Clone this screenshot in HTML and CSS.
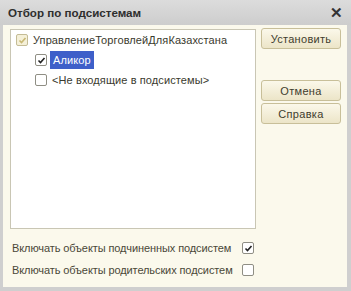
FILE: index.html
```html
<!DOCTYPE html>
<html>
  <head>
    <title>Отбор по подсистемам</title>
    <link rel="stylesheet" href="styles.css">
  </head>
  <body>
    <div class="window">
      <div class="title-bar">
        <span class="title">Отбор по подсистемам</span>
        <span class="close">✕</span>
      </div>
      <div class="window-body">
        <div class="main">
          <div class="tree">
            <div class="tree-row">
              <span class="check check-gray">
                <svg width="9" height="9" viewBox="0 0 9 9"><path d="M1.5 4.5 L3.5 6.5 L7.5 2" fill="none" stroke="#c8b874" stroke-width="1.6"/></svg>
              </span>
              <span class="tree-text">УправлениеТорговлейДляКазахстана</span>
            </div>
            <div class="tree-row level-2">
              <span class="check">
                <svg width="9" height="9" viewBox="0 0 9 9"><path d="M1.5 4.5 L3.5 6.5 L7.5 2" fill="none" stroke="#222" stroke-width="1.6"/></svg>
              </span>
              <span class="tree-text selected">Аликор</span>
            </div>
            <div class="tree-row level-2">
              <span class="check"></span>
              <span class="tree-text">&lt;Не входящие в подсистемы&gt;</span>
            </div>
          </div>
          <div class="buttons">
            <button class="btn">Установить</button>
            <button class="btn btn-cancel">Отмена</button>
            <button class="btn">Справка</button>
          </div>
        </div>
        <div class="options">
          <div class="option">
            <span class="option-text">Включать объекты подчиненных подсистем</span>
            <span class="check">
              <svg width="9" height="9" viewBox="0 0 9 9"><path d="M1.5 4.5 L3.5 6.5 L7.5 2" fill="none" stroke="#222" stroke-width="1.6"/></svg>
            </span>
          </div>
          <div class="option">
            <span class="option-text">Включать объекты родительских подсистем</span>
            <span class="check"></span>
          </div>
        </div>
      </div>
    </div>
  </body>
</html>
```

FILE: styles.css
```css
body {
  margin: 0;
  font-family: "Liberation Sans", Arial, sans-serif;
  font-size: 11px;
  color: #3a3a2e;
}

.window {
  width: 351px;
  height: 291px;
  background: #cfcfcf;
  display: flex;
  flex-direction: column;
}

.title-bar {
  height: 25px;
  display: flex;
  align-items: center;
  justify-content: space-between;
  padding: 0 8px 0 8px;
  background: linear-gradient(#dcdcdc, #cdcdcd);
}

.title {
  font-weight: bold;
  font-size: 11.6px;
  color: #2e2e2e;
}

.close {
  font-size: 15px;
  font-weight: bold;
  color: #333;
}

.window-body {
  flex: 1;
  margin: 0 4px 4px 3px;
  background: #fbf9ec;
  padding: 4px 6px 0 7px;
  display: flex;
  flex-direction: column;
}

.main {
  display: flex;
  gap: 5px;
}

.tree {
  box-sizing: border-box;
  width: 246px;
  height: 200px;
  background: #fff;
  border: 1px solid #c9c6b4;
}

.tree-row {
  height: 20px;
  display: flex;
  align-items: center;
  padding-left: 5px;
  white-space: nowrap;
}

.tree-row.level-2 {
  padding-left: 24px;
}

.check {
  width: 10px;
  height: 10px;
  border: 1px solid #8f8e84;
  border-radius: 2px;
  background: #fff;
  display: inline-flex;
  align-items: center;
  justify-content: center;
  flex-shrink: 0;
}

.check-gray {
  background: #f5f0d8;
  border-color: #c4bc96;
}

.tree-text {
  margin-left: 3px;
  letter-spacing: 0.1px;
  padding: 2px 2px;
}

.tree-text.selected {
  background: #3e5fc9;
  color: #fff;
  padding: 3px 3px;
}

.buttons {
  display: flex;
  flex-direction: column;
  width: 80px;
  margin-top: -1px;
}

.btn {
  height: 21px;
  font-family: "Liberation Sans", Arial, sans-serif;
  font-size: 11px;
  letter-spacing: 0.3px;
  color: #3f3d2e;
  background: linear-gradient(#fbf8ea, #ece5c8);
  border: 1px solid #c8bf99;
  border-radius: 3px;
  margin-bottom: 2px;
  padding: 0;
}

.btn-cancel {
  margin-top: 29px;
}

.options {
  display: flex;
  flex-direction: column;
  padding-top: 8px;
}

.option {
  height: 22px;
  display: flex;
  align-items: center;
  padding-left: 2px;
  white-space: nowrap;
}

.option-text {
  width: 230px;
  letter-spacing: -0.1px;
  color: #4a4838;
}
```
